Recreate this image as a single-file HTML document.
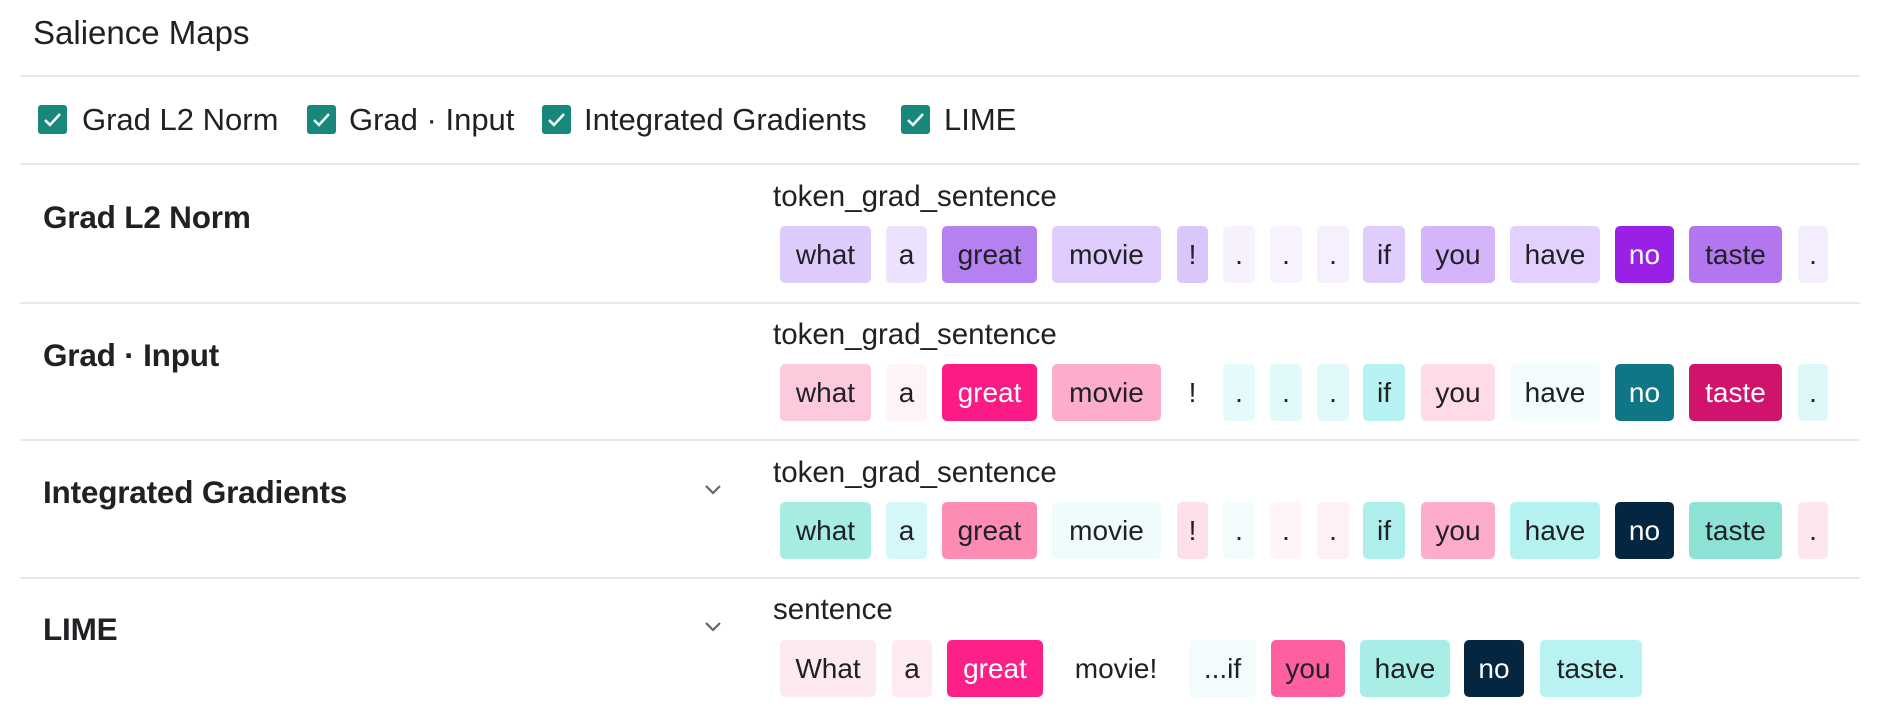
<!DOCTYPE html>
<html><head><meta charset="utf-8"><style>
body{margin:0;width:1880px;height:708px;background:#fff;font-family:"Liberation Sans",sans-serif;color:#202124;position:relative;overflow:hidden}
.a{position:absolute;white-space:nowrap}
.line{position:absolute;left:20px;width:1840px;height:2px;background:#e6e8eb}
.t{position:absolute;height:57px;line-height:57px;text-align:center;font-size:28px;border-radius:5px;color:#202124}
.w{color:#fff}
.cb{position:absolute;top:105px;width:29px;height:29px;background:#18877c;border-radius:3px}
.cl{position:absolute;top:104px;font-size:31px;line-height:32px;white-space:nowrap}
.lab{position:absolute;left:43px;font-size:31.5px;font-weight:bold;letter-spacing:-0.2px;white-space:nowrap}
.fn{position:absolute;left:773px;font-size:29.5px;white-space:nowrap}
</style></head><body>
<div class="a" style="left:33px;top:14px;font-size:33px">Salience Maps</div>
<div class="line" style="top:75px"></div>
<div class="cb" style="left:38px"><svg width="29" height="29"><path d="M7 15l5 5 10-11" stroke="#fff" stroke-width="2.5" fill="none"/></svg></div>
<div class="cl" style="left:82px">Grad L2 Norm</div>
<div class="cb" style="left:307px"><svg width="29" height="29"><path d="M7 15l5 5 10-11" stroke="#fff" stroke-width="2.5" fill="none"/></svg></div>
<div class="cl" style="left:349px">Grad · Input</div>
<div class="cb" style="left:542px"><svg width="29" height="29"><path d="M7 15l5 5 10-11" stroke="#fff" stroke-width="2.5" fill="none"/></svg></div>
<div class="cl" style="left:584px">Integrated Gradients</div>
<div class="cb" style="left:901px"><svg width="29" height="29"><path d="M7 15l5 5 10-11" stroke="#fff" stroke-width="2.5" fill="none"/></svg></div>
<div class="cl" style="left:944px">LIME</div>
<div class="line" style="top:163px"></div>
<div class="line" style="top:302px"></div>
<div class="line" style="top:439px"></div>
<div class="line" style="top:577px"></div>

<div class="lab" style="top:199px">Grad L2 Norm</div>
<div class="lab" style="top:337px">Grad · Input</div>
<div class="lab" style="top:474px">Integrated Gradients</div>
<div class="lab" style="top:611px">LIME</div>
<svg class="a" style="left:703px;top:483px" width="20" height="14"><path d="M3 3l7 7 7-7" stroke="#666" stroke-width="2.2" fill="none"/></svg>
<svg class="a" style="left:703px;top:620px" width="20" height="14"><path d="M3 3l7 7 7-7" stroke="#666" stroke-width="2.2" fill="none"/></svg>

<div class="fn" style="top:180px">token_grad_sentence</div>
<div class="fn" style="top:318px">token_grad_sentence</div>
<div class="fn" style="top:456px">token_grad_sentence</div>
<div class="fn" style="top:593px">sentence</div>

<div style="position:absolute;left:0;top:226px">
<div class="t" style="left:780px;width:91px;background:#dccbfb">what</div>
<div class="t" style="left:886px;width:41px;background:#ede2fd">a</div>
<div class="t" style="left:942px;width:95px;background:#b580ef">great</div>
<div class="t" style="left:1052px;width:109px;background:#e0cbfd">movie</div>
<div class="t" style="left:1177px;width:31px;background:#dac6fb">!</div>
<div class="t" style="left:1223px;width:32px;background:#f7f1fe">.</div>
<div class="t" style="left:1270px;width:32px;background:#f8f2fe">.</div>
<div class="t" style="left:1317px;width:32px;background:#f6f0fe">.</div>
<div class="t" style="left:1363px;width:42px;background:#e0cdfd">if</div>
<div class="t" style="left:1421px;width:74px;background:#d4b4fb">you</div>
<div class="t" style="left:1510px;width:90px;background:#e3d0fd">have</div>
<div class="t w" style="left:1615px;width:59px;background:#9a20e6">no</div>
<div class="t" style="left:1689px;width:93px;background:#b277ee">taste</div>
<div class="t" style="left:1798px;width:30px;background:#f4edfe">.</div>
</div>
<div style="position:absolute;left:0;top:364px">
<div class="t" style="left:780px;width:91px;background:#fcc9dd">what</div>
<div class="t" style="left:886px;width:41px;background:#fef3f7">a</div>
<div class="t w" style="left:942px;width:95px;background:#fc1a84">great</div>
<div class="t" style="left:1052px;width:109px;background:#fdaccb">movie</div>
<div class="t" style="left:1177px;width:31px;background:#fff">!</div>
<div class="t" style="left:1223px;width:32px;background:#e5fafa">.</div>
<div class="t" style="left:1270px;width:32px;background:#e2f9fa">.</div>
<div class="t" style="left:1317px;width:32px;background:#e1f9fa">.</div>
<div class="t" style="left:1363px;width:42px;background:#b5f2f1">if</div>
<div class="t" style="left:1421px;width:74px;background:#fedbe7">you</div>
<div class="t" style="left:1510px;width:90px;background:#f3fdfd">have</div>
<div class="t w" style="left:1615px;width:59px;background:#0f7686">no</div>
<div class="t w" style="left:1689px;width:93px;background:#d0136c">taste</div>
<div class="t" style="left:1798px;width:30px;background:#ddf6f8">.</div>
</div>
<div style="position:absolute;left:0;top:502px">
<div class="t" style="left:780px;width:91px;background:#a6ece3">what</div>
<div class="t" style="left:886px;width:41px;background:#d4f8fa">a</div>
<div class="t" style="left:942px;width:95px;background:#fc8cb4">great</div>
<div class="t" style="left:1052px;width:109px;background:#f0fcfc">movie</div>
<div class="t" style="left:1177px;width:31px;background:#fee0ea">!</div>
<div class="t" style="left:1223px;width:32px;background:#f2fcfc">.</div>
<div class="t" style="left:1270px;width:32px;background:#fff5f7">.</div>
<div class="t" style="left:1317px;width:32px;background:#fff0f4">.</div>
<div class="t" style="left:1363px;width:42px;background:#aeefec">if</div>
<div class="t" style="left:1421px;width:74px;background:#fdaccb">you</div>
<div class="t" style="left:1510px;width:90px;background:#b6f2f0">have</div>
<div class="t w" style="left:1615px;width:59px;background:#052640">no</div>
<div class="t" style="left:1689px;width:93px;background:#8de2d6">taste</div>
<div class="t" style="left:1798px;width:30px;background:#fde6ee">.</div>
</div>
<div style="position:absolute;left:0;top:640px">
<div class="t" style="left:780px;width:96px;background:#fdeaf0">What</div>
<div class="t" style="left:892px;width:40px;background:#feeaf0">a</div>
<div class="t w" style="left:947px;width:96px;background:#fd2089">great</div>
<div class="t" style="left:1057px;width:118px;background:#fff">movie!</div>
<div class="t" style="left:1189px;width:67px;background:#f2fcfd">...if</div>
<div class="t" style="left:1271px;width:74px;background:#fe5fa0">you</div>
<div class="t" style="left:1360px;width:90px;background:#a8ede6">have</div>
<div class="t w" style="left:1464px;width:60px;background:#052640">no</div>
<div class="t" style="left:1540px;width:102px;background:#b8f3f2">taste.</div>
</div>
</body></html>
